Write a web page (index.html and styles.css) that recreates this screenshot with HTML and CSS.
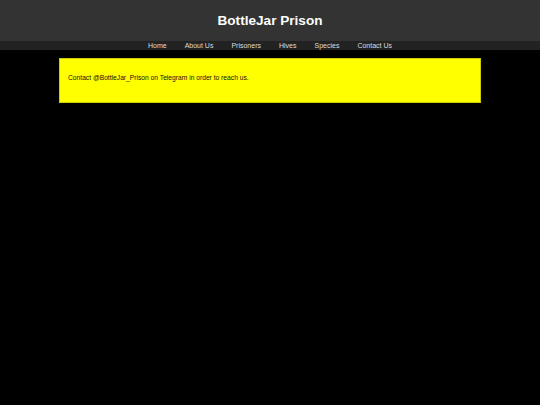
FILE: index.html
```html
<!DOCTYPE html>
<html>
<head>
<meta charset="utf-8">
<link rel="stylesheet" href="styles.css">
</head>
<body>
<header class="site-header">
  <h1 class="title">BottleJar Prison</h1>
</header>
<nav class="nav">
  <a href="#">Home</a>
  <a href="#">About Us</a>
  <a href="#">Prisoners</a>
  <a href="#">Hives</a>
  <a href="#">Species</a>
  <a href="#">Contact Us</a>
</nav>
<main class="main">
  <div class="notice">
    <p>Contact @BottleJar_Prison on Telegram in order to reach us.</p>
  </div>
</main>
</body>
</html>
```
FILE: styles.css
```css
html, body {
  margin: 0;
  padding: 0;
  background: #000;
  font-family: "Liberation Sans", Arial, sans-serif;
}
.site-header {
  background: #333;
  height: 41px;
  display: flex;
  align-items: center;
  justify-content: center;
}
.title {
  margin: 0;
  color: #fff;
  font-size: 13.6px;
  font-weight: bold;
}
.nav {
  background: #222;
  height: 9px;
  display: flex;
  justify-content: center;
  align-items: center;
  gap: 18px;
}
.nav a {
  color: #ddd;
  text-decoration: none;
  font-size: 7px;
  line-height: 9px;
}
.main {
  padding: 8px 59px;
}
.notice {
  background: #ff0;
  border: 1px solid #cc0;
  box-sizing: border-box;
  height: 45px;
  padding: 15px 8px 0;
}
.notice p {
  margin: 0;
  font-size: 6.7px;
  line-height: 8px;
  color: #111;
}
```
